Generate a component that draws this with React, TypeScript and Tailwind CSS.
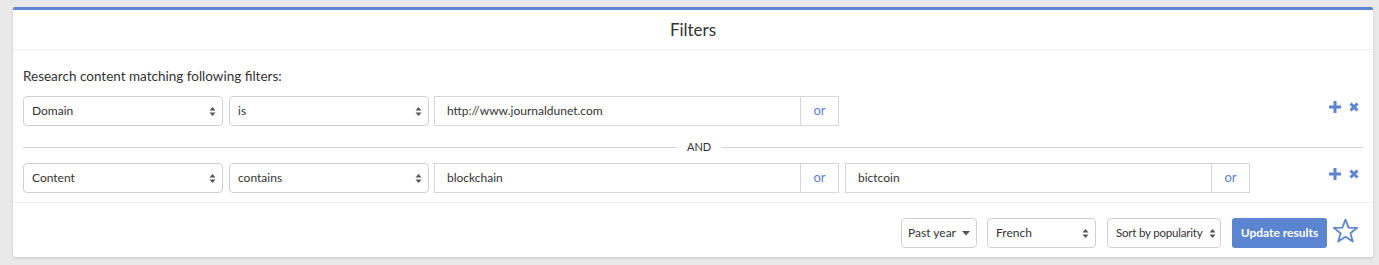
import React from "react";

const font = { fontFamily: "Lato, 'Open Sans', sans-serif" };

function Updown() {
    return (
        <svg width="7" height="11" viewBox="0 0 7 11" className="shrink-0">
            <path d="M3.5 1 L6.5 4.5 L0.5 4.5 Z" fill="#555" />
            <path d="M3.5 10 L6.5 6.5 L0.5 6.5 Z" fill="#555" />
        </svg>
    );
}

function Select({ label, width, small }: { label: string; width: string; small?: boolean }) {
    return (
        <div
            className={`${width} h-[30px] flex items-center justify-between border border-[#cfcfd8] rounded-[4px] bg-white text-[#333] whitespace-nowrap ${
                small ? "pl-[8px] pr-[4px] text-[11.5px] tracking-[-0.2px]" : "pl-[8px] pr-[6px] text-[12px]"
            }`}
        >
            <span>{label}</span>
            <Updown />
        </div>
    );
}

function InputGroup({ value }: { value: string }) {
    return (
        <div className="flex h-[30px] w-[405px]">
            <div className="flex-1 flex items-center pl-[12px] border border-[#d5d5de] text-[12px] text-[#333]">{value}</div>
            <div className="w-[38px] flex items-center justify-center border border-l-0 border-[#d5d5de] text-[13px] text-[#5b84d1]">or</div>
        </div>
    );
}

function RowActions() {
    return (
        <div className="ml-auto flex items-center gap-[8px] pb-[9px]">
            <svg width="12" height="12" viewBox="0 0 12 12">
                <path d="M4.5 0h3v4.5H12v3H7.5V12h-3V7.5H0v-3h4.5z" fill="#5b84d1" />
            </svg>
            <svg width="10" height="10" viewBox="0 0 10 10">
                <path d="M1.5 1.5 L8.5 8.5 M8.5 1.5 L1.5 8.5" stroke="#5b84d1" strokeWidth="3" />
            </svg>
        </div>
    );
}

export default function App() {
    return (
        <div className="w-[1379px] h-[265px] bg-[#e9e9e9] pt-[7px] pl-[13px]" style={font}>
            <div className="w-[1360px] h-[250px] bg-white border-t-[3px] border-[#5b84d1] rounded-[2px] shadow-[0_1px_3px_rgba(0,0,0,0.15)] flex flex-col">
                <div className="h-[40px] flex items-center justify-center border-b border-[#efefef] text-[17px] text-[#333]">
                    Filters
                </div>
                <div className="px-[10px] pt-[17px]">
                    <div className="text-[13.5px] text-[#333] leading-[18px] mb-[11px]">Research content matching following filters:</div>
                    <div className="flex items-center pr-[4px]">
                        <div className="flex items-center gap-[6px]">
                            <Select label="Domain" width="w-[200px]" />
                            <Select label="is" width="w-[200px]" />
                        </div>
                        <div className="ml-[5px]">
                            <InputGroup value="http://www.journaldunet.com" />
                        </div>
                        <RowActions />
                    </div>
                    <div className="flex items-center h-[12px] mt-[15px] mb-[10px]">
                        <div className="w-[654px] h-px bg-[#d3d3de]" />
                        <span className="px-[10px] text-[11px] text-[#333]">AND</span>
                        <div className="flex-1 h-px bg-[#d3d3de]" />
                    </div>
                    <div className="flex items-center pr-[4px]">
                        <div className="flex items-center gap-[6px]">
                            <Select label="Content" width="w-[200px]" />
                            <Select label="contains" width="w-[200px]" />
                        </div>
                        <div className="ml-[5px] flex gap-[6px]">
                            <InputGroup value="blockchain" />
                            <InputGroup value="bictcoin" />
                        </div>
                        <RowActions />
                    </div>
                </div>
                <div className="mt-[9px] border-t border-[#efefef] flex-1 flex items-start justify-end pr-[14px] pt-[15px]">
                    <div className="w-[76px] h-[30px] flex items-center justify-center gap-[6px] border border-[#cfcfd8] rounded-[4px] text-[12px] text-[#333]">
                        Past year
                        <svg width="8" height="5" viewBox="0 0 8 5"><path d="M0 0h8L4 4.5z" fill="#555" /></svg>
                    </div>
                    <div className="ml-[10px]">
                        <Select label="French" width="w-[109px]" />
                    </div>
                    <div className="ml-[11px]">
                        <Select label="Sort by popularity" width="w-[114px]" small />
                    </div>
                    <div className="ml-[11px] w-[95px] h-[30px] flex items-center justify-center bg-[#5b84d1] rounded-[3px] text-white text-[12px] font-bold">
                        Update results
                    </div>
                    <svg className="ml-[5px]" width="27" height="26" viewBox="0 0 27 26">
                        <path d="M13.5 1.5 L16.6 9.6 L25.2 9.9 L18.4 15.2 L20.8 23.6 L13.5 18.8 L6.2 23.6 L8.6 15.2 L1.8 9.9 L10.4 9.6 Z" fill="none" stroke="#5b84d1" strokeWidth="1.8" strokeLinejoin="round" />
                    </svg>
                </div>
            </div>
        </div>
    );
}
